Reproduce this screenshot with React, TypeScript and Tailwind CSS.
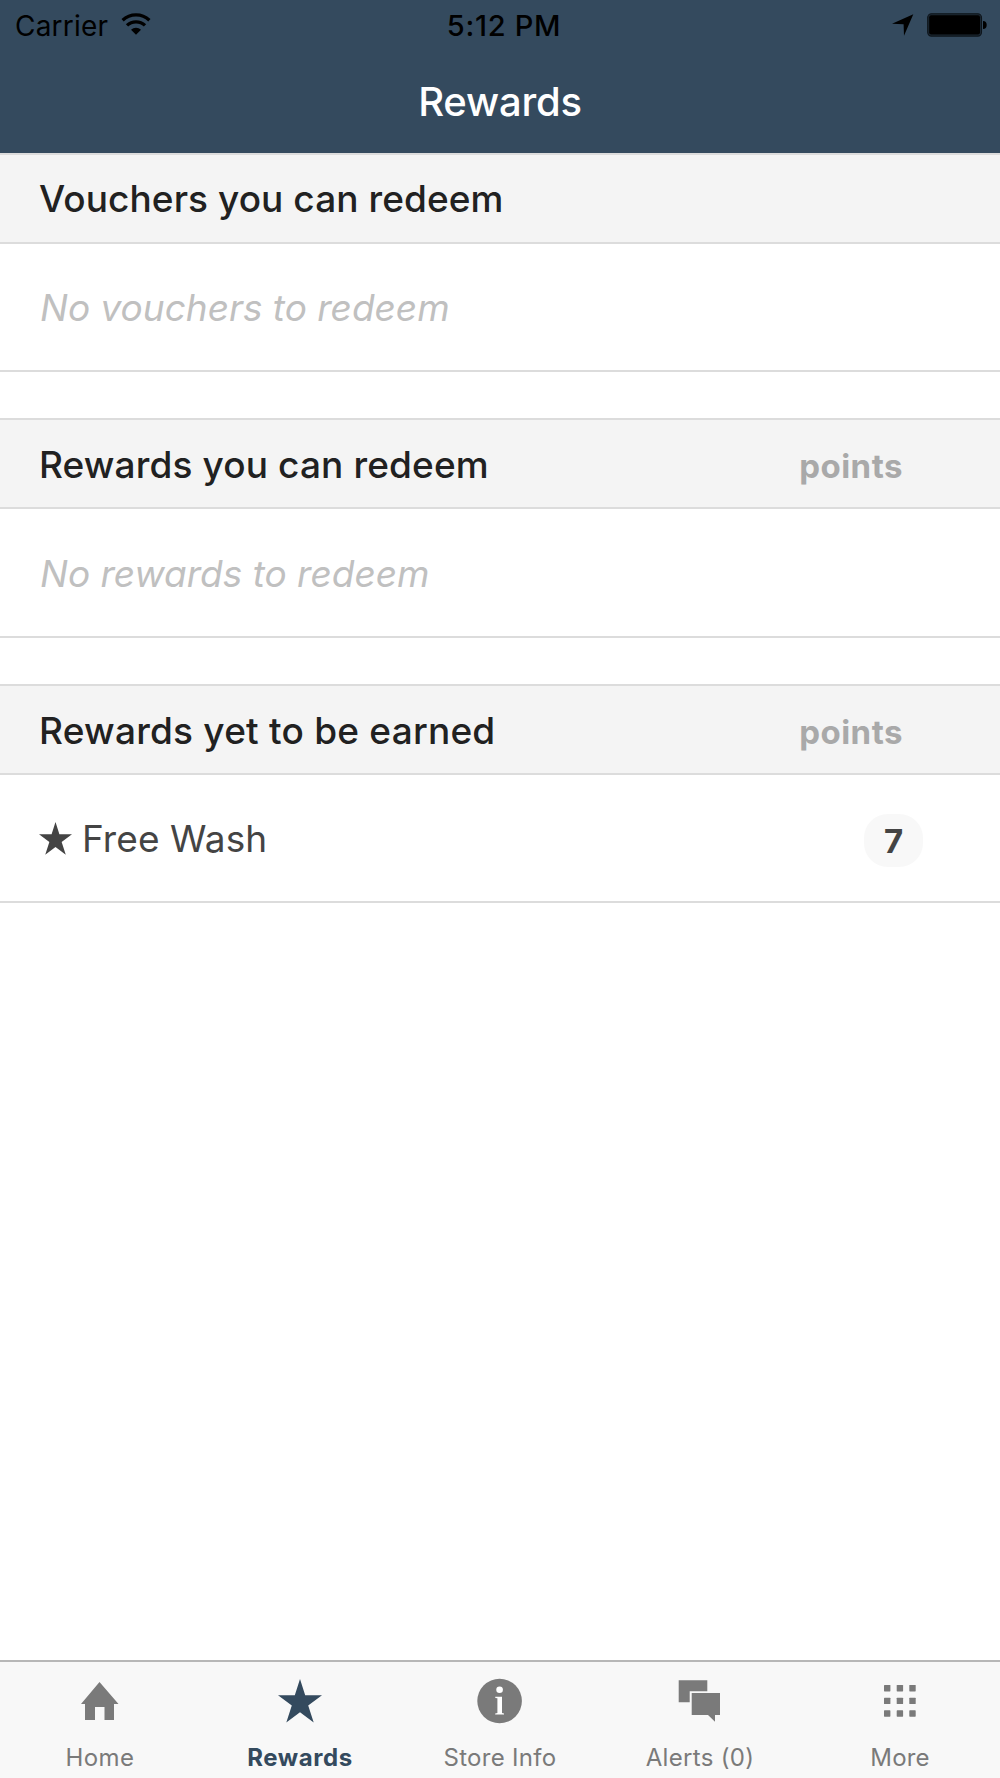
import React, { type ReactNode } from 'react';

function WifiIcon() {
  return (
    <svg className="h-6 w-8" viewBox="0 0 32 24" fill="none" stroke="#000" strokeWidth="3.3">
      <path d="M2.6 8.2A19.7 19.7 0 0 1 29.4 8.2" />
      <path d="M7 13.4A13 13 0 0 1 25 13.4" />
      <path d="M16 22.7 11 17.7A7.2 7.2 0 0 1 21 17.7Z" fill="#000" stroke="none" />
    </svg>
  );
}

function LocationIcon() {
  return (
    <svg className="h-[22px] w-[22px]" viewBox="0 0 22 22">
      <path d="M0 9.7 21.3 .3 12 21.8 11.6 10.2Z" fill="#000" />
    </svg>
  );
}

function BatteryIcon() {
  return (
    <svg className="h-6 w-[60px]" viewBox="0 0 60 24">
      <rect x=".7" y=".7" width="53.8" height="22.4" rx="3.8" fill="#1c2833" stroke="#0d141a" strokeWidth="1.1" />
      <rect x="2.2" y="2.2" width="50.8" height="19.4" rx="2" fill="#000" />
      <path d="M56 8a3.6 3.9 0 0 1 0 8Z" fill="#000" />
    </svg>
  );
}

function StarIcon({ className }: { className: string }) {
  return (
    <svg className={className} viewBox="0 0 44 44" fill="currentColor">
      <path d="M22 0 27.2 16.3H44L30.2 26.6 35.7 43.6 22 33.2 8.3 43.6 13.8 26.6 0 16.3H16.8Z" />
    </svg>
  );
}

function HomeIcon() {
  return (
    <svg className="h-11 w-11" viewBox="0 0 44 44" fill="currentColor">
      <path d="M21.5 3 40.5 25H36V41H26.5V28H17V41H7V25H3Z" />
    </svg>
  );
}

function InfoIcon() {
  return (
    <svg className="h-11 w-11 overflow-visible" viewBox="0 0 44 44">
      <circle cx="21.6" cy="22" r="22.3" fill="currentColor" />
      <circle cx="21.6" cy="10.8" r="3.3" fill="#fff" />
      <path d="M17.3 17.7H24V34L26 34.5V35.6H17.2V34.5L19.4 34V19.3L17.3 18.9Z" fill="#fff" />
    </svg>
  );
}

function AlertsIcon() {
  return (
    <svg className="h-11 w-11" viewBox="0 0 44 44" fill="currentColor">
      <path d="M.7 1.3H29.3V12.2H11.7V23.3H.7Z" />
      <path d="M13.7 14H42V36H37V42.7L30 36H13.7Z" />
    </svg>
  );
}

function MoreIcon() {
  return (
    <svg className="h-11 w-11" viewBox="0 0 44 44" fill="currentColor">
      {[6, 18.7, 31.3].map((y) =>
        [6, 18.7, 31.3].map((x) => <rect key={`${x}-${y}`} x={x} y={y} width="6.4" height="6.4" rx=".6" />),
      )}
    </svg>
  );
}

type SectionProps = { title: string; points?: boolean; titleClass?: string; rowClass?: string; children: ReactNode };

function Section({ title, points, titleClass = '', rowClass = 'h-32', children }: SectionProps) {
  return (
    <section>
      <div className="flex h-[91px] items-center justify-between border-y-2 border-[#dcdcdc] bg-[#f4f4f4] pr-[97px] pl-[39px]">
        <h2 className={`text-[37px] leading-[38px] font-medium text-[#212121] ${titleClass}`}>{title}</h2>
        {points && (
          <span className="mt-[5px] text-[33px] leading-[34px] font-bold tracking-[0.5px] text-[#a9a9a9]">points</span>
        )}
      </div>
      <div className={`flex items-center border-b-2 border-[#dcdcdc] pt-0.5 pr-[77px] pl-[39px] ${rowClass}`}>
        {children}
      </div>
    </section>
  );
}

function Empty({ children }: { children: ReactNode }) {
  return <p className="pl-px text-[37px] leading-[38px] text-[#c0c0c0] italic">{children}</p>;
}

const tabs = [
  { label: 'Home', icon: <HomeIcon />, text: 'tracking-[0.4px]' },
  { label: 'Rewards', icon: <StarIcon className="h-11 w-11" />, text: 'font-bold tracking-[0.6px]', active: true },
  { label: 'Store Info', icon: <InfoIcon />, text: 'tracking-[0.3px]' },
  { label: 'Alerts (0)', icon: <AlertsIcon />, text: 'tracking-[0.3px]' },
  { label: 'More', icon: <MoreIcon />, text: 'tracking-[0.2px]' },
];

export default function App() {
  return (
    <div className="flex h-[1778px] w-[1000px] flex-col overflow-hidden bg-white font-['Inter',sans-serif]">
      <header className="h-[153px] shrink-0 bg-[#344a5e]">
        <div className="grid h-[51px] grid-cols-3 items-center pr-[13px] pl-[15px] text-[28px] leading-none text-black">
          <div className="flex items-center gap-3">
            <span className="tracking-[0.2px]">Carrier</span>
            <span className="-mt-[3px]"><WifiIcon /></span>
          </div>
          <div className="pl-[6px] text-center text-[29px] font-medium tracking-[0.7px]">5:12 PM</div>
          <div className="-mt-px flex items-center justify-end gap-[13px]">
            <LocationIcon />
            <BatteryIcon />
          </div>
        </div>
        <h1 className="flex h-[102px] items-center justify-center text-[40px] leading-none font-medium tracking-[-0.2px] text-white">
          Rewards
        </h1>
      </header>

      <main className="flex flex-1 flex-col gap-[46px]">
        <Section title="Vouchers you can redeem" titleClass="tracking-[0.08px]">
          <Empty>No vouchers to redeem</Empty>
        </Section>
        <Section
          title="Rewards you can redeem"
          points
          titleClass="mt-0.5 tracking-[0.13px]"
          rowClass="h-[129px]"
        >
          <Empty>No rewards to redeem</Empty>
        </Section>
        <Section title="Rewards yet to be earned" points titleClass="mt-0.5 tracking-[0.23px]">
          <StarIcon className="-mt-px h-[33px] w-[33px] text-[#444]" />
          <span className="ml-[10px] text-[37px] leading-[38px] tracking-[0.1px] text-[#444]">Free Wash</span>
          <span className="mt-[3px] ml-auto flex h-[53px] w-[59px] items-center justify-center rounded-3xl bg-[#f8f8f8] text-[33px] leading-[34px] font-bold text-[#444]">
            7
          </span>
        </Section>
      </main>

      <nav className="grid h-[118px] shrink-0 grid-cols-5 border-t-2 border-[#b7b7b7] bg-[#f8f8f8]">
        {tabs.map((tab) => (
          <a
            key={tab.label}
            className={`flex flex-col items-center pt-[17px] ${tab.active ? 'text-[#344a5e]' : 'text-[#7a7a7a]'}`}
          >
            {tab.icon}
            <span className={`mt-[23px] text-2xl leading-6 ${tab.text}`}>{tab.label}</span>
          </a>
        ))}
      </nav>
    </div>
  );
}
